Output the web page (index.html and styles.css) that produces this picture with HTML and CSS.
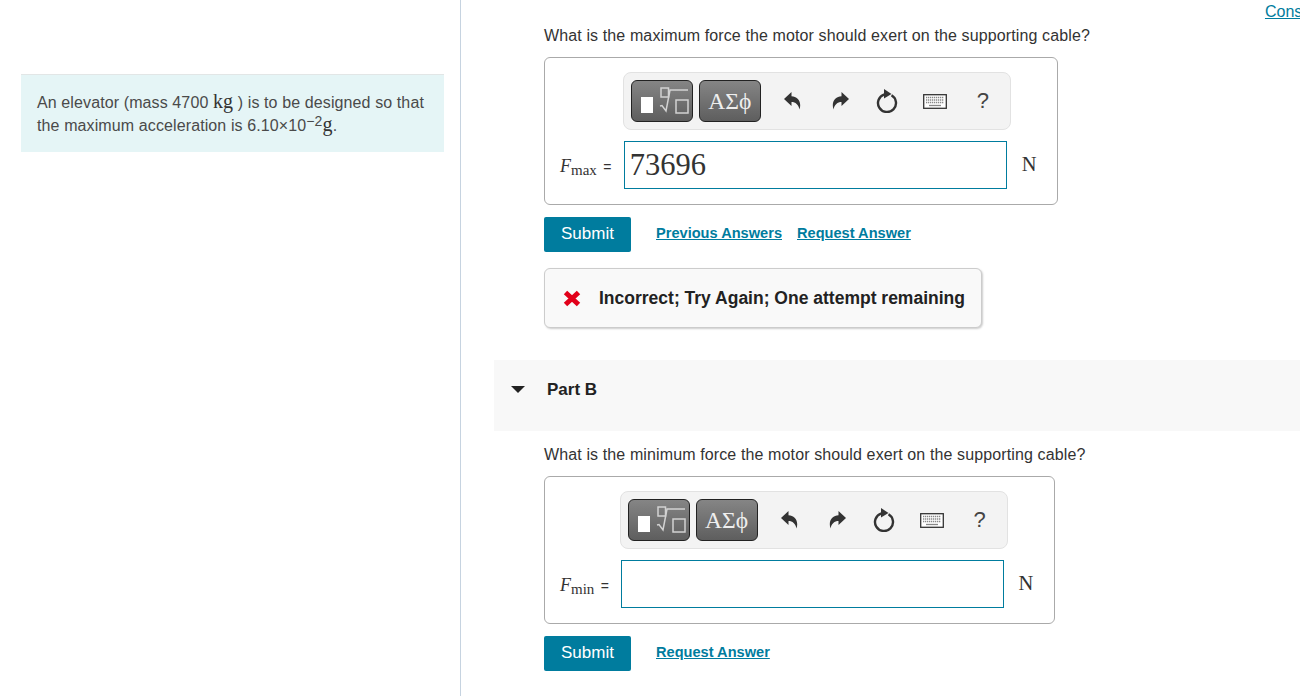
FILE: index.html
```html
<!DOCTYPE html>
<html lang="en">
<head>
  <meta charset="UTF-8">
  <meta name="viewport" content="width=device-width, initial-scale=1.0">
  <title>Elevator Problem</title>
  <link rel="stylesheet" href="styles.css">
</head>
<body>
  <svg class="sprites" width="0" height="0" aria-hidden="true">
    <symbol id="icon-template" viewBox="0 0 60 40">
      <rect x="9" y="16" width="12" height="16" fill="#fff"/>
      <g fill="none" stroke="#d2d2d2" stroke-width="1.500">
        <rect x="29" y="7" width="7.500" height="9"/>
        <rect x="44" y="19" width="12" height="13"/>
        <path d="M28 25l2-.5 4 5.500 4-21h18"/>
      </g>
    </symbol>
    <symbol id="icon-undo" viewBox="0 0 17 18">
      <path d="M0 7L7.500 0v4.200C13.500 4.500 18 9.500 15.500 17.500 14.500 12.500 11.500 10 7.500 10v4z" fill="#333"/>
    </symbol>
    <symbol id="icon-reset" viewBox="0 0 22 24">
      <path d="M15.500 6.200A9 9 0 1 1 8.500 5.350" fill="none" stroke="#333" stroke-width="2.400"/>
      <path d="M8 0l7.500 5L8 9.500z" fill="#333"/>
    </symbol>
    <symbol id="icon-keyboard" viewBox="0 0 24 15">
      <rect x="0.700" y="0.700" width="22.600" height="13.600" fill="#fff" stroke="#333" stroke-width="1.300"/>
      <path d="M3 3.500h18M3 6h18M3 8.500h18" stroke="#888" stroke-width="1.300" stroke-dasharray="1.300 .7"/>
      <path d="M6 11.500h12" stroke="#888" stroke-width="1.300"/>
    </symbol>
  </svg>

  <div class="page">
    <aside class="sidebar">
      <div class="intro">
        An elevator (mass 4700 <span class="math math-unit">kg</span> ) is to be designed so that
        the maximum acceleration is 6.10×10<sup class="exp">−2</sup><span class="math math-unit">g</span>.
      </div>
    </aside>

    <main class="main">
      <div class="top-links">
        <a href="#" class="constants">Constants</a>
      </div>

      <section class="part">
        <p class="question">What is the maximum force the motor should exert on the supporting cable?</p>
        <div class="answer-box answer-box-a">
          <div class="toolbar">
            <button type="button" class="tool-btn"><svg width="60" height="40"><use href="#icon-template"/></svg></button>
            <button type="button" class="tool-btn tool-greek">ΑΣϕ</button>
            <span class="tool-icons">
              <svg class="icon" width="17" height="18"><use href="#icon-undo"/></svg>
              <svg class="icon icon-flip" width="17" height="18"><use href="#icon-undo"/></svg>
              <svg class="icon" width="22" height="24"><use href="#icon-reset"/></svg>
              <svg class="icon" width="24" height="15"><use href="#icon-keyboard"/></svg>
              <span class="icon help">?</span>
            </span>
          </div>
          <label class="field-label" for="fmax"><i>F</i><sub>max</sub> <span class="eq">=</span></label>
          <input class="answer-input" id="fmax" type="text" value="73696">
          <span class="unit">N</span>
        </div>
        <div class="actions">
          <button type="button" class="btn">Submit</button>
          <a href="#" class="action-link">Previous Answers</a>
          <a href="#" class="action-link">Request Answer</a>
        </div>
        <div class="feedback">
          <svg width="18" height="17" viewBox="0 0 18 17"><path d="M2.500 2.500l13 12M15.500 2.500l-13 12" stroke="#e2001a" stroke-width="5"/></svg>
          <span>Incorrect; Try Again; One attempt remaining</span>
        </div>
      </section>

      <div class="part-header">
        <span class="caret"></span>
        <h2>Part B</h2>
      </div>

      <section class="part">
        <p class="question">What is the minimum force the motor should exert on the supporting cable?</p>
        <div class="answer-box answer-box-b">
          <div class="toolbar">
            <button type="button" class="tool-btn"><svg width="60" height="40"><use href="#icon-template"/></svg></button>
            <button type="button" class="tool-btn tool-greek">ΑΣϕ</button>
            <span class="tool-icons">
              <svg class="icon" width="17" height="18"><use href="#icon-undo"/></svg>
              <svg class="icon icon-flip" width="17" height="18"><use href="#icon-undo"/></svg>
              <svg class="icon" width="22" height="24"><use href="#icon-reset"/></svg>
              <svg class="icon" width="24" height="15"><use href="#icon-keyboard"/></svg>
              <span class="icon help">?</span>
            </span>
          </div>
          <label class="field-label" for="fmin"><i>F</i><sub>min</sub> <span class="eq">=</span></label>
          <input class="answer-input" id="fmin" type="text">
          <span class="unit">N</span>
        </div>
        <div class="actions">
          <button type="button" class="btn">Submit</button>
          <a href="#" class="action-link">Request Answer</a>
        </div>
      </section>
    </main>
  </div>
</body>
</html>
```

FILE: styles.css
```css
html, body {
  margin: 0;
  height: 100%;
  overflow: hidden;
}
body {
  font-family: "Liberation Sans", Arial, sans-serif;
  font-size: 16px;
  color: #333;
  background-color: #fff;
}
.sprites {
  display: block;
}
.page {
  display: flex;
  height: 696px;
}
.sidebar {
  box-sizing: border-box;
  flex: 0 0 461px;
  padding: 74px 16px 0 21px;
  border-right: 1px solid #c6d3e0;
}
.intro {
  padding: 16px 16px 15px;
  line-height: 23px;
  letter-spacing: 0.11px;
  color: #4a4a4a;
  background-color: #e5f5f6;
  border-top: 1px solid #e2e6e6;
}
.math {
  font-family: "Liberation Serif", serif;
}
.math-unit {
  font-size: 20px;
  line-height: 0;
  color: #333;
}
.exp {
  font-size: 14px;
  line-height: 0;
  vertical-align: 5px;
}
.main {
  flex: 1;
  min-width: 0;
  overflow: hidden;
}
.top-links {
  height: 27px;
  text-align: right;
}
.constants {
  display: inline-block;
  margin-right: -37px;
  padding-top: 3px;
  color: #007c9e;
}
.part {
  padding-left: 83px;
}
.question {
  margin: 0 0 12px;
  line-height: 18px;
  letter-spacing: 0.12px;
}
.answer-box {
  display: grid;
  grid-template-columns: auto 383px auto;
  align-items: center;
  box-sizing: border-box;
  padding: 14px 20px 15px 15px;
  border: 1px solid #aaa;
  border-radius: 6px;
}
.answer-box-a {
  width: 514px;
}
.answer-box-b {
  width: 511px;
}
.toolbar {
  grid-column: 2 / 4;
  display: flex;
  align-items: center;
  box-sizing: border-box;
  width: 388px;
  height: 58px;
  margin: 0 0 11px -1px;
  padding-left: 7px;
  background-color: #f3f3f3;
  border: 1px solid #e2e2e2;
  border-radius: 8px;
}
.tool-btn {
  box-sizing: border-box;
  width: 62px;
  height: 42px;
  margin-right: 6px;
  padding: 0;
  color: #eee;
  font-family: "Liberation Serif", serif;
  font-size: 23.500px;
  background: linear-gradient(#858585, #5e5e5e);
  border: 1px solid #222;
  border-radius: 6px;
}
.tool-btn svg {
  display: block;
}
.tool-icons {
  display: flex;
  align-items: center;
  margin-left: 17px;
}
.icon {
  display: block;
  flex: none;
}
.icon-flip {
  transform: scaleX(-1);
  margin-left: 31px;
}
.tool-icons .icon:nth-child(3) {
  margin-left: 27px;
}
.tool-icons .icon:nth-child(4) {
  margin-left: 25px;
}
.help {
  margin-left: 30px;
  font-size: 22px;
  color: #444;
}
.field-label {
  padding-top: 2px;
  font-family: "Liberation Serif", serif;
  font-size: 18px;
  white-space: nowrap;
}
.answer-box-a .field-label {
  padding-right: 12px;
}
.answer-box-b .field-label {
  padding-right: 11px;
}
.field-label sub {
  font-size: 15px;
  line-height: 0;
  vertical-align: -3px;
}
.eq {
  font-family: "Liberation Sans", sans-serif;
  font-size: 14px;
  margin-left: 2px;
}
.answer-input {
  box-sizing: border-box;
  width: 383px;
  height: 48px;
  padding: 0 5px;
  font-family: "Liberation Serif", serif;
  font-size: 30.500px;
  color: #333;
  border: 1px solid #007c9e;
  outline: none;
}
.unit {
  margin-left: 15px;
  padding-bottom: 2px;
  font-family: "Liberation Serif", serif;
  font-size: 20.500px;
}
.actions {
  display: flex;
  align-items: center;
  margin-top: 12px;
}
.btn {
  width: 87px;
  height: 35px;
  margin-right: 25px;
  padding: 0 0 2px;
  font-family: inherit;
  font-size: 17px;
  color: #fff;
  background-color: #007c9e;
  border: none;
  border-radius: 2px;
}
.action-link {
  margin-right: 15px;
  padding-bottom: 4px;
  font-size: 14.600px;
  font-weight: bold;
  color: #007c9e;
}
.feedback {
  display: inline-flex;
  align-items: center;
  box-sizing: border-box;
  height: 60px;
  margin-top: 16px;
  padding: 0 16px 0 18px;
  font-size: 17.500px;
  font-weight: bold;
  color: #222;
  background-color: #f9f9f9;
  border: 1px solid #ccc;
  border-radius: 6px;
  box-shadow: 1px 1px 2px rgba(0, 0, 0, 0.2);
}
.feedback svg {
  margin-right: 18px;
}
.part-header {
  display: flex;
  align-items: center;
  box-sizing: border-box;
  height: 71px;
  margin: 32px 0 15px 33px;
  padding: 0 0 12px 17px;
  background-color: #f8f8f8;
}
.caret {
  width: 0;
  height: 0;
  border-left: 7px solid transparent;
  border-right: 7px solid transparent;
  border-top: 7px solid #222;
}
.part-header h2 {
  margin: 0 0 0 22px;
  font-size: 17px;
  color: #222;
}
```
